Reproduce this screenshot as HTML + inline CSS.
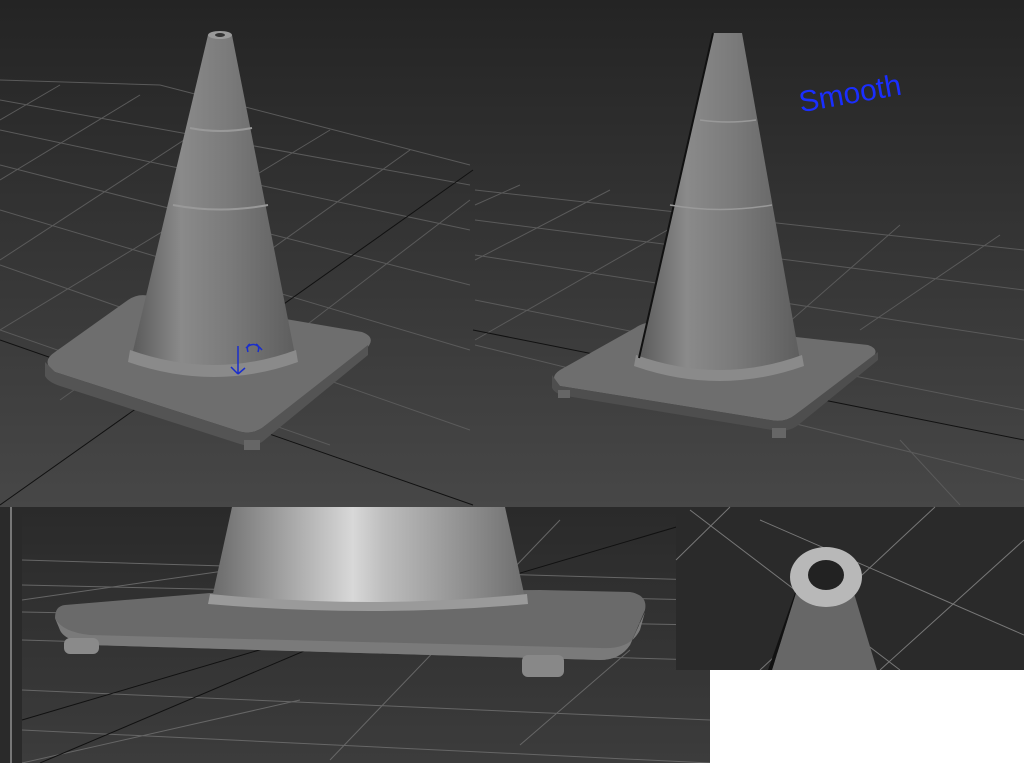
<!DOCTYPE html>
<html><head><style>
html,body{margin:0;padding:0;background:#fff;}
svg{display:block}
</style></head><body>
<svg width="1024" height="763" viewBox="0 0 1024 763" xmlns="http://www.w3.org/2000/svg">
<defs>
<linearGradient id="bg" x1="0" y1="0" x2="0" y2="1">
<stop offset="0" stop-color="#242424"/><stop offset="1" stop-color="#474747"/></linearGradient>
<linearGradient id="bg2" x1="0" y1="0" x2="0" y2="1">
<stop offset="0" stop-color="#2a2a2a"/><stop offset="1" stop-color="#3c3c3c"/></linearGradient>
<linearGradient id="cone" x1="0" y1="0" x2="1" y2="0">
<stop offset="0" stop-color="#5a5a5a"/><stop offset="0.3" stop-color="#8a8a8a"/><stop offset="0.6" stop-color="#7a7a7a"/><stop offset="1" stop-color="#5e5e5e"/></linearGradient>
<linearGradient id="cone3" x1="0" y1="0" x2="1" y2="0">
<stop offset="0" stop-color="#6a6a6a"/><stop offset="0.45" stop-color="#d8d8d8"/><stop offset="0.55" stop-color="#bdbdbd"/><stop offset="1" stop-color="#6e6e6e"/></linearGradient>
</defs>
<rect x="0" y="0" width="1024" height="507" fill="url(#bg)"/>
<rect x="473" y="0" width="551" height="507" fill="url(#bg)" opacity="0.9"/>
<g stroke="#5a5a5a" stroke-width="1" fill="none">
<path d="M0 100 L470 185 M0 130 L470 230 M0 165 L470 285 M0 210 L470 350 M0 265 L470 430 M0 330 L330 445 M60 85 L0 120 M140 95 L0 180 M230 110 L0 260 M330 130 L0 330 M410 150 L60 400 M470 200 L300 330 M0 80 L160 85 L470 165"/>
<path d="M475 190 L1024 250 M475 220 L1024 290 M475 255 L1024 340 M475 300 L1024 410 M475 345 L1024 480 M520 185 L475 205 M610 190 L475 260 M720 200 L475 340 M900 225 L700 400 M1000 235 L860 330 M900 440 L960 505"/>
</g>
<path d="M0 505 L473 170 M0 340 L473 505 M473 330 L1024 440" stroke="#111" stroke-width="1"/>
<path d="M55 352 Q40 362 55 372 L235 430 Q250 436 262 428 L365 350 Q378 338 362 332 L150 296 Q138 293 128 300 Z" fill="#6e6e6e"/>
<path d="M45 362 L45 376 Q48 382 60 386 L240 444 Q252 448 262 442 L368 355 L368 345 L262 428 Q250 436 235 430 L55 372 Z" fill="#545454"/>
<rect x="244" y="440" width="16" height="10" fill="#666"/>
<path d="M208 35 L232 35 L295 355 Q215 385 132 355 Z" fill="url(#cone)"/>
<path d="M130 350 Q215 380 296 350 L298 362 Q215 392 128 362 Z" fill="#8a8a8a"/>
<ellipse cx="220" cy="35" rx="12" ry="4" fill="#9a9a9a"/><ellipse cx="220" cy="35" rx="5" ry="2" fill="#333"/>
<path d="M190 128 Q220 134 252 128 M173 205 Q220 214 268 205" stroke="#999" stroke-width="2" fill="none"/>
<path d="M238 346 L238 374 M238 374 L231 367 M238 374 L245 368 M248 352 Q246 346 250 344 M258 352 Q260 346 256 344 M246 348 Q254 340 262 350" stroke="#1a2ecc" stroke-width="1.5" fill="none"/>
<path d="M560 370 Q548 378 560 386 L770 420 Q785 423 795 415 L870 360 Q882 350 868 345 L660 322 Q645 321 635 328 Z" fill="#6e6e6e"/>
<path d="M552 375 L552 388 Q555 394 566 396 L772 430 Q787 433 797 426 L878 360 L878 352 L795 415 Q785 423 770 420 L560 386 Z" fill="#4e4e4e"/>
<rect x="772" y="428" width="14" height="10" fill="#666"/><rect x="558" y="390" width="12" height="8" fill="#666"/>
<path d="M713 33 L742 33 L800 360 Q720 390 638 360 Z" fill="url(#cone)"/>
<path d="M636 355 Q720 385 802 355 L804 366 Q720 396 634 366 Z" fill="#8a8a8a"/>
<path d="M713 33 L639 358" stroke="#111" stroke-width="2" fill="none"/>
<path d="M700 120 Q728 124 756 120 M670 205 Q720 214 772 205" stroke="#999" stroke-width="1.5" fill="none"/>
<text x="798" y="100" font-family="'Liberation Sans',sans-serif" font-size="30" fill="#1a2eff" transform="rotate(-10 870 90)">Smooth</text>
<rect x="0" y="507" width="710" height="256" fill="url(#bg2)"/>
<rect x="0" y="507" width="22" height="256" fill="#2a2a2a"/>
<rect x="10" y="507" width="2" height="256" fill="#777"/>
<g stroke="#666" stroke-width="1" fill="none">
<path d="M22 560 L700 580 M22 585 L700 600 M22 612 L700 625 M22 640 L700 660 M22 690 L710 720 M22 730 L710 763 M22 600 L300 560 M300 700 L22 763 M330 760 L560 520 M520 745 L630 650"/>
</g>
<path d="M22 720 L700 520 M40 763 L330 640" stroke="#111" stroke-width="1"/>
<path d="M65 605 Q55 606 55 618 L60 630 Q64 640 90 645 L600 660 Q620 660 630 645 L645 610 Q648 595 630 592 L540 590 L210 593 Z" fill="#6a6a6a"/>
<path d="M55 618 L60 630 Q64 640 90 645 L600 660 Q620 660 630 645 L645 612 L640 630 Q630 650 600 648 L90 635 Q62 632 55 618 Z" fill="#7a7a7a"/>
<rect x="64" y="638" width="35" height="16" rx="6" fill="#8a8a8a"/>
<rect x="522" y="655" width="42" height="22" rx="6" fill="#888"/>
<path d="M232 507 L505 507 L525 598 Q370 612 212 598 Z" fill="url(#cone3)"/>
<path d="M210 594 Q370 610 527 594 L528 604 Q370 618 208 604 Z" fill="#9a9a9a"/>
<rect x="676" y="507" width="348" height="163" fill="#2a2a2a"/>
<g stroke="#777" stroke-width="1" fill="none">
<path d="M690 510 L900 670 M760 520 L1024 635 M935 507 L760 670 M1024 540 L880 670 M676 560 L730 507"/>
</g>
<path d="M772 670 L800 580 L850 580 L877 670 Z" fill="#676767"/>
<path d="M772 670 L800 580 L796 590 L768 670 Z" fill="#111"/>
<ellipse cx="826" cy="577" rx="36" ry="30" fill="#b8b8b8"/>
<ellipse cx="826" cy="575" rx="18" ry="15" fill="#222"/>
<rect x="710" y="670" width="314" height="93" fill="#fff"/>
</svg>
</body></html>
